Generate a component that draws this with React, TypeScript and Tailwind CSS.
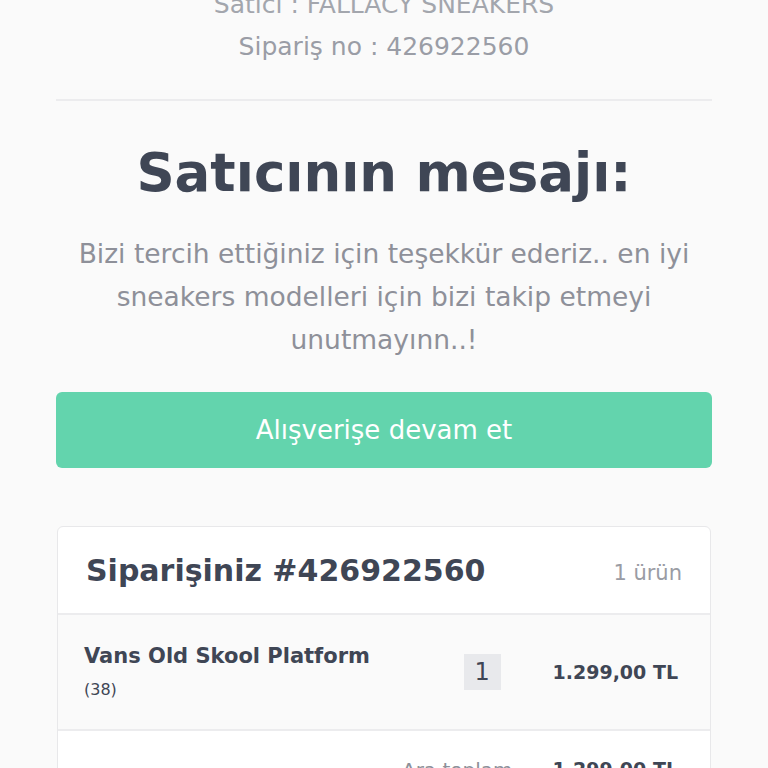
import React from "react";

export default function App() {
  return (
    <div className="min-h-[768px] bg-[#fafafa] font-['DejaVu_Sans',sans-serif] overflow-hidden">
      <div className="px-14 pb-10">
        <div className="-mt-[16px] text-center text-[25px] leading-[42px] font-normal text-[#9a9da6]">
          <div className="text-[#a3a6ad]">Satıcı : FALLACY SNEAKERS</div>
          <div>Sipariş no : 426922560</div>
        </div>
        <div className="mt-[31px] border-t-2 border-[#ececee]" />
        <h1 className="mt-[42px] text-center text-[53px] leading-[60px] font-bold text-[#3f4655]">
          Satıcının mesajı:
        </h1>
        <p className="mt-[29px] px-2 text-center text-[26.5px] leading-[43px] font-normal text-[#8e9099]">
          Bizi tercih ettiğiniz için teşekkür ederiz.. en iyi sneakers modelleri için bizi takip etmeyi unutmayınn..!
        </p>
        <button className="mt-[31px] flex h-[76px] w-full items-center justify-center rounded-md bg-[#63d4ad] text-[26px] font-normal text-white">
          Alışverişe devam et
        </button>
        <div className="mt-[58px] mx-px rounded-md border border-[#e8e8ea] bg-white">
          <div className="flex h-[88px] items-center justify-between border-b-2 border-[#ececee] pl-7 pr-7">
            <div className="text-[30px] font-bold text-[#3f4655]">Siparişiniz #426922560</div>
            <div className="mt-2 text-[21px] text-[#9a9ca4]">1 ürün</div>
          </div>
          <div className="flex h-[116px] items-center border-b-2 border-[#ececee] bg-[#fafafa] pl-[26px] pr-8">
            <div className="flex-1">
              <div className="text-[21px] font-bold text-[#3f4655] leading-[28px]">Vans Old Skool Platform</div>
              <div className="mt-[8px] text-[16px] text-[#3f4655]">(38)</div>
            </div>
            <div className="flex h-[36px] w-[37px] items-center justify-center bg-[#e8e9ec] text-[24px] text-[#3f4655]">1</div>
            <div className="ml-[52px] text-[19px] font-bold text-[#3f4655]">1.299,00 TL</div>
          </div>
          <div className="flex h-[100px] items-start justify-end gap-10 pt-[24px] pr-8">
            <div className="text-[20px] text-[#8e9099]">Ara toplam</div>
            <div className="text-[19px] font-bold text-[#3f4655]">1.299,00 TL</div>
          </div>
        </div>
      </div>
    </div>
  );
}
